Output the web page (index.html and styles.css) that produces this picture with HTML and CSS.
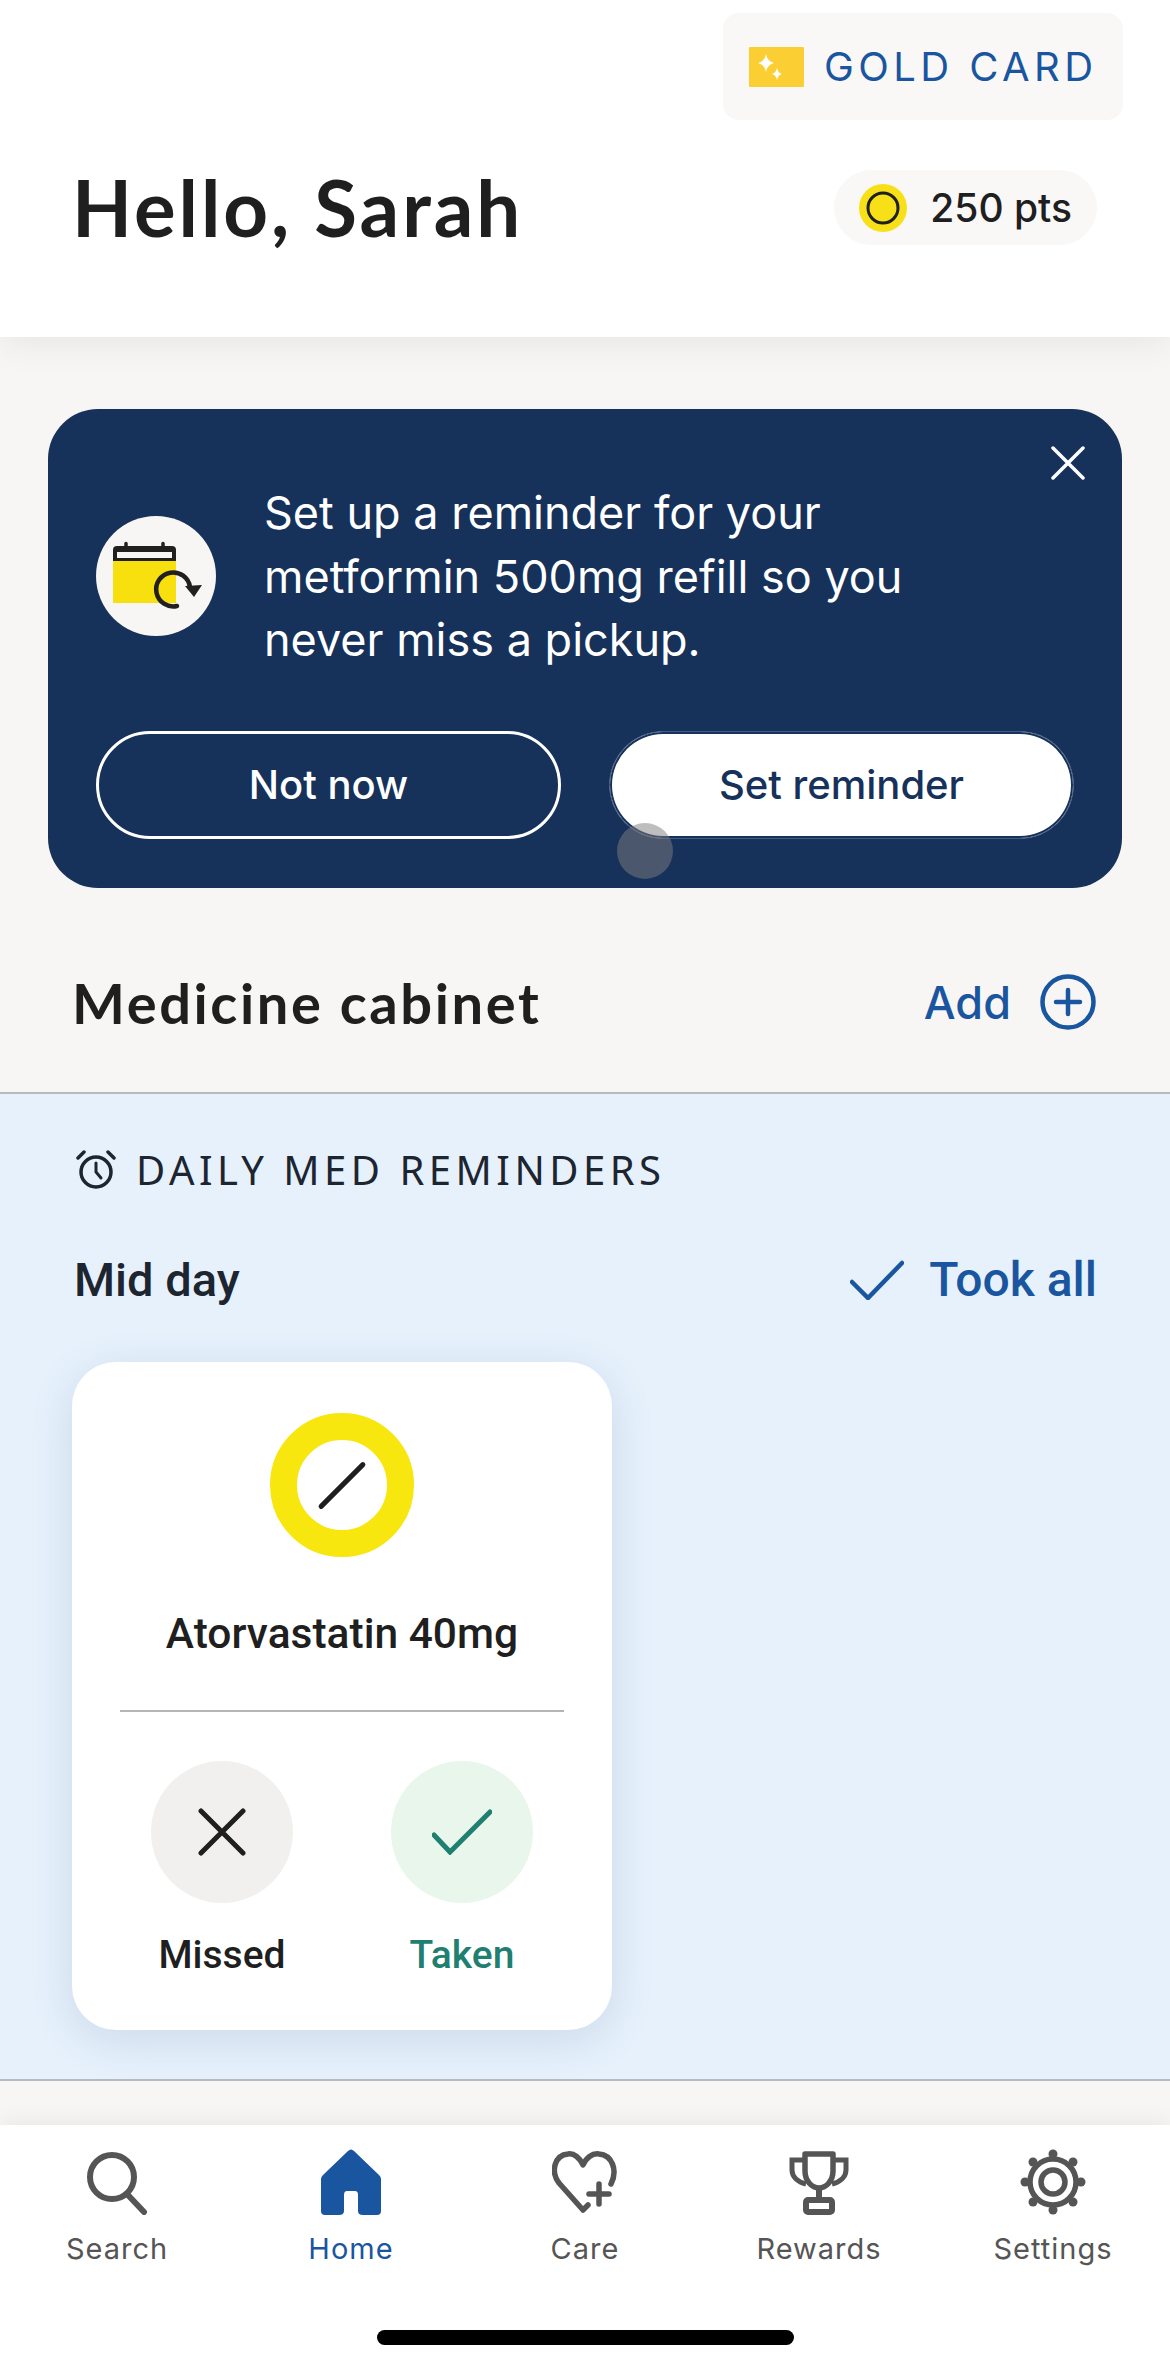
FILE: index.html
```html
<!DOCTYPE html>
<html lang="en">
<head>
    <meta charset="UTF-8">
    <title>Home</title>
    <link rel="stylesheet" href="styles.css">
</head>
<body>
<div class="page">
    <header class="top">
        <div class="gold-card">
            <svg class="gold-icon" viewBox="0 0 55 40">
                <rect width="55" height="40" rx="1" fill="#fbcf33"/>
                <path d="M17 7 Q18 14 25 16 Q18 18 17 25 Q16 18 9 16 Q16 14 17 7Z" fill="#fff"/>
                <path d="M28 21 Q29 26 33 27 Q29 28 28 33 Q27 28 23 27 Q27 26 28 21Z" fill="#fff"/>
            </svg>
            <span>GOLD CARD</span>
        </div>
        <div class="greeting">
            <h1>Hello, Sarah</h1>
            <div class="points">
                <svg class="coin" viewBox="0 0 48 48">
                    <circle cx="24" cy="24" r="24" fill="#f8e018"/>
                    <circle cx="24" cy="24" r="15" fill="none" stroke="#1f1f1f" stroke-width="3"/>
                </svg>
                <span>250 pts</span>
            </div>
        </div>
    </header>

    <main class="content">
        <section class="banner">
            <button class="close" type="button" aria-label="Close">
                <svg viewBox="0 0 34 34"><path d="M2 2 L32 32 M32 2 L2 32" stroke="#fff" stroke-width="3.5" stroke-linecap="round"/></svg>
            </button>
            <div class="banner-body">
                <div class="banner-icon">
                    <svg viewBox="0 0 90 70">
                        <rect x="0" y="20" width="63" height="42" fill="#f8e00f"/>
                        <path d="M0 20 V9 Q0 5 4 5 H59 Q63 5 63 9 V20Z" fill="#211f1f"/>
                        <rect x="4" y="11" width="55" height="6" fill="#f8f6f4"/>
                        <path d="M13 5 V2.5 M50 5 V2.5" stroke="#211f1f" stroke-width="3.5" stroke-linecap="round"/>
                        <path d="M64 65 A17 17 0 1 1 77 46" fill="none" stroke="#211f1f" stroke-width="4.5" stroke-linecap="round"/>
                        <path d="M72 45 L89 44 L81 56Z" fill="#211f1f"/>
                    </svg>
                </div>
                <p>Set up a reminder for your metformin 500mg refill so you never miss a pickup.</p>
            </div>
            <div class="banner-actions">
                <button class="btn btn-outline" type="button">Not now</button>
                <button class="btn btn-solid" type="button">Set reminder</button>
            </div>
            <div class="touch-dot"></div>
        </section>

        <div class="cabinet-head">
            <h2>Medicine cabinet</h2>
            <div class="add">
                <span>Add</span>
                <svg viewBox="0 0 56 56">
                    <circle cx="28" cy="28" r="25.5" fill="none" stroke="#1a569f" stroke-width="4.5"/>
                    <path d="M28 16 V40 M16 28 H40" stroke="#1a569f" stroke-width="4.5" stroke-linecap="round"/>
                </svg>
            </div>
        </div>

        <section class="reminders">
            <div class="reminders-title">
                <svg viewBox="0 0 40 40">
                    <circle cx="20" cy="22" r="15" fill="none" stroke="#1c2530" stroke-width="3.5"/>
                    <path d="M20 13 V22 L25 28" fill="none" stroke="#1c2530" stroke-width="3" stroke-linecap="round"/>
                    <path d="M2 8 L8 2 M38 8 L32 2" stroke="#1c2530" stroke-width="3.5" stroke-linecap="round"/>
                </svg>
                <span>DAILY MED REMINDERS</span>
            </div>
            <div class="slot-head">
                <h3>Mid day</h3>
                <div class="took-all">
                    <svg viewBox="0 0 54 40"><path d="M2 22 L18 38 L52 3" fill="none" stroke="#1a569f" stroke-width="4.5" stroke-linecap="round"/></svg>
                    <span>Took all</span>
                </div>
            </div>
            <article class="med-card">
                <div class="pill"><div class="pill-line"></div></div>
                <div class="med-name">Atorvastatin 40mg</div>
                <div class="med-actions">
                    <div class="med-action">
                        <div class="round round-missed">
                            <svg viewBox="0 0 48 48"><path d="M3 3 L45 45 M45 3 L3 45" stroke="#1f1f1f" stroke-width="5" stroke-linecap="round"/></svg>
                        </div>
                        <span>Missed</span>
                    </div>
                    <div class="med-action taken">
                        <div class="round round-taken">
                            <svg viewBox="0 0 60 46"><path d="M2 26 L18 43 L58 3" fill="none" stroke="#1f7f70" stroke-width="5" stroke-linecap="round"/></svg>
                        </div>
                        <span>Taken</span>
                    </div>
                </div>
            </article>
        </section>
    </main>

    <nav class="tabbar">
        <div class="tabs">
            <div class="tab">
                <svg viewBox="0 0 66 66">
                    <circle cx="28" cy="28" r="22" fill="none" stroke="#555" stroke-width="6"/>
                    <path d="M43 45 L60 63" stroke="#555" stroke-width="6" stroke-linecap="round"/>
                </svg>
                <span>Search</span>
            </div>
            <div class="tab active">
                <svg viewBox="0 0 66 66">
                    <path d="M30 2 Q33 -1 36 2 L61 26 Q63 28 63 30 V62 Q63 66 59 66 H45 Q40 66 40 62 V46 Q40 42 37 42 H29 Q26 42 26 46 V62 Q26 66 21 66 H7 Q3 66 3 62 V30 Q3 28 5 26Z" fill="#1a569f"/>
                </svg>
                <span>Home</span>
            </div>
            <div class="tab">
                <svg viewBox="0 0 66 66">
                    <path d="M36 56 L31 61 L7 34 C-2 22 3 6 16 5 C22 4 28 9 31 16 C34 9 40 4 47 5 C60 6 66 21 59 35" fill="none" stroke="#555" stroke-width="5.5" stroke-linecap="round" stroke-linejoin="round"/>
                    <path d="M47 35 V55 M37 45 H57" stroke="#555" stroke-width="5.5" stroke-linecap="round"/>
                </svg>
                <span>Care</span>
            </div>
            <div class="tab">
                <svg viewBox="0 0 66 66">
                    <path d="M19 5 H47 V22 C47 32 40 39 33 39 C26 39 19 32 19 22Z" fill="none" stroke="#555" stroke-width="5.5" stroke-linejoin="round"/>
                    <path d="M19 11 H6 V21 C6 28 12 33 20 35 M47 11 H60 V21 C60 28 54 33 46 35" fill="none" stroke="#555" stroke-width="5"/>
                    <path d="M33 39 V51" stroke="#555" stroke-width="6"/>
                    <rect x="20" y="51" width="26" height="12" rx="2" fill="none" stroke="#555" stroke-width="6"/>
                </svg>
                <span>Rewards</span>
            </div>
            <div class="tab">
                <svg viewBox="0 0 66 66">
                    <g fill="#555">
                        <circle cx="33" cy="5" r="4.5"/><circle cx="33" cy="61" r="4.5"/>
                        <circle cx="5" cy="33" r="4.5"/><circle cx="61" cy="33" r="4.5"/>
                        <circle cx="13" cy="13" r="4.5"/><circle cx="53" cy="13" r="4.5"/>
                        <circle cx="13" cy="53" r="4.5"/><circle cx="53" cy="53" r="4.5"/>
                    </g>
                    <circle cx="33" cy="33" r="23" fill="none" stroke="#555" stroke-width="5.5"/>
                    <circle cx="33" cy="33" r="12" fill="none" stroke="#555" stroke-width="5.5"/>
                </svg>
                <span>Settings</span>
            </div>
        </div>
        <div class="home-bar"></div>
    </nav>
</div>
</body>
</html>
```

FILE: styles.css
```css
* {
    box-sizing: border-box;
}

body {
    margin: 0;
    background-color: #f8f6f4;
    font-family: "Liberation Sans", Arial, sans-serif;
    color: #1f1f1f;
}

h1, h2, h3, p {
    margin: 0;
}

button {
    font-family: inherit;
    cursor: pointer;
}

.page {
    display: flex;
    flex-direction: column;
    height: 2374px;
    overflow: hidden;
}

/* header */
.top {
    position: relative;
    z-index: 2;
    height: 337px;
    padding: 13px 47px 0 72px;
    background-color: #fff;
    box-shadow: 0 6px 34px rgba(0, 0, 0, 0.07);
}

.gold-card {
    display: flex;
    align-items: center;
    gap: 20px;
    width: 400px;
    height: 107px;
    margin-left: auto;
    padding-left: 26px;
    border-radius: 16px;
    background-color: #faf8f7;
    font-family: Inter, sans-serif;
    font-size: 40px;
    letter-spacing: 4.4px;
    color: #1a569f;
}

.gold-icon {
    width: 55px;
    height: 40px;
}

.greeting {
    display: flex;
    align-items: center;
    justify-content: space-between;
    margin-top: 50px;
    padding-right: 26px;
}

h1 {
    font-family: Lato, sans-serif;
    font-size: 78px;
    font-weight: 700;
    letter-spacing: 3px;
    line-height: 75px;
}

.points {
    display: flex;
    align-items: center;
    gap: 23px;
    height: 75px;
    padding: 0 25px;
    border-radius: 38px;
    background-color: #faf8f7;
    font-family: Inter, sans-serif;
    font-size: 39px;
    font-weight: 500;
}

.coin {
    width: 48px;
    height: 48px;
}

/* banner */
.content {
    flex: 1;
    padding-top: 72px;
}

.banner {
    position: relative;
    height: 479px;
    margin: 0 48px;
    padding: 72px 48px 0;
    border-radius: 50px;
    background-color: #16315a;
    color: #fff;
}

.close {
    position: absolute;
    top: 37px;
    right: 37px;
    width: 34px;
    height: 34px;
    padding: 0;
    border: 0;
    background: none;
}

.close svg {
    display: block;
}

.banner-body {
    display: flex;
    align-items: center;
    gap: 48px;
}

.banner-icon {
    display: flex;
    flex: none;
    align-items: center;
    justify-content: center;
    width: 120px;
    height: 120px;
    padding-left: 4px;
    border-radius: 50%;
    background-color: #f8f6f4;
}

.banner-icon svg {
    width: 90px;
    height: 70px;
}

.banner-body p {
    width: 680px;
    font-family: Inter, sans-serif;
    font-size: 45px;
    line-height: 63.5px;
}

.banner-actions {
    display: flex;
    justify-content: space-between;
    margin-top: 59px;
}

.btn {
    height: 108px;
    border-radius: 54px;
    font-family: Inter, sans-serif;
    font-size: 40px;
    font-weight: 500;
}

.btn-outline {
    width: 465px;
    border: 3px solid #fff;
    background: none;
    color: #fff;
}

.btn-solid {
    width: 465px;
    border: 1px solid #465b7d;
    box-shadow: inset 0 0 0 2px #16315a;
    background-color: #fff;
    color: #16315a;
}

/* press indicator left over from the recording */
.touch-dot {
    position: absolute;
    top: 414px;
    left: 569px;
    width: 56px;
    height: 56px;
    border-radius: 50%;
    background-color: rgba(126, 126, 126, 0.5);
}

/* cabinet */
.cabinet-head {
    display: flex;
    align-items: center;
    justify-content: space-between;
    height: 206px;
    padding: 24px 74px 0 72px;
    border-bottom: 2px solid #b4bbc2;
}

h2 {
    font-family: Lato, sans-serif;
    font-size: 56px;
    font-weight: 700;
    letter-spacing: 2.6px;
}

.add {
    display: flex;
    align-items: center;
    gap: 29px;
    font-family: Inter, sans-serif;
    font-size: 45px;
    font-weight: 500;
    color: #1a569f;
}

.add svg {
    width: 56px;
    height: 56px;
}

/* reminders */
.reminders {
    height: 987px;
    padding: 48px 73px 0 72px;
    border-bottom: 2px solid #b4bbc2;
    background-color: #e6f1fc;
}

.reminders-title {
    display: flex;
    align-items: center;
    gap: 20px;
    padding-left: 4px;
    font-family: "Noto Sans", sans-serif;
    font-size: 40px;
    letter-spacing: 4.5px;
    color: #1c2530;
}

.reminders-title svg {
    width: 40px;
    height: 40px;
}

.slot-head {
    display: flex;
    align-items: center;
    justify-content: space-between;
    margin-top: 54px;
    padding-left: 2px;
}

h3 {
    font-family: Roboto, sans-serif;
    font-size: 47px;
    font-weight: 500;
    color: #1c2530;
}

.took-all {
    display: flex;
    align-items: center;
    gap: 25px;
    font-family: Roboto, sans-serif;
    font-size: 48px;
    font-weight: 500;
    color: #1a569f;
}

.took-all svg {
    width: 54px;
    height: 40px;
}

.med-card {
    width: 540px;
    height: 668px;
    margin-top: 54px;
    padding-top: 51px;
    border-radius: 44px;
    background-color: #fff;
    box-shadow: 0 10px 44px rgba(50, 80, 120, 0.14);
}

.pill {
    display: flex;
    align-items: center;
    justify-content: center;
    width: 144px;
    height: 144px;
    margin: 0 auto;
    border: 27px solid #f8e60f;
    border-radius: 50%;
}

.pill-line {
    width: 64px;
    height: 5px;
    border-radius: 3px;
    background-color: #1f1f1f;
    transform: rotate(-45deg);
}

.med-name {
    margin-top: 53px;
    font-family: Roboto, sans-serif;
    font-size: 42.5px;
    font-weight: 500;
    line-height: 48px;
    text-align: center;
}

.med-actions {
    display: flex;
    justify-content: space-between;
    margin: 52px 48px 0;
    padding: 49px 31px 0;
    border-top: 2px solid #b5b5b5;
}

.med-action {
    display: flex;
    flex-direction: column;
    align-items: center;
    gap: 29px;
    font-family: Roboto, sans-serif;
    font-size: 39px;
    font-weight: 500;
    line-height: 46px;
}

.taken {
    color: #1f7f70;
}

.round {
    display: flex;
    align-items: center;
    justify-content: center;
    width: 142px;
    height: 142px;
    border-radius: 50%;
}

.round-missed {
    background-color: #f1f0ee;
}

.round-missed svg {
    width: 48px;
    height: 48px;
}

.round-taken {
    background-color: #e8f6ec;
}

.round-taken svg {
    width: 60px;
    height: 46px;
}

/* bottom tabs */
.tabbar {
    position: relative;
    z-index: 2;
    height: 249px;
    padding-top: 24px;
    background-color: #fff;
    box-shadow: 0 -4px 20px rgba(0, 0, 0, 0.06);
}

.tabs {
    display: grid;
    grid-template-columns: repeat(5, 1fr);
}

.tab {
    display: flex;
    flex-direction: column;
    align-items: center;
    gap: 16px;
    font-family: Inter, sans-serif;
    font-size: 29px;
    letter-spacing: 1px;
    color: #555;
}

.tab svg {
    width: 66px;
    height: 66px;
}

.tab.active {
    color: #1a569f;
}

.home-bar {
    width: 417px;
    height: 15px;
    margin: 64px auto 0;
    border-radius: 8px;
    background-color: #000;
}
```
